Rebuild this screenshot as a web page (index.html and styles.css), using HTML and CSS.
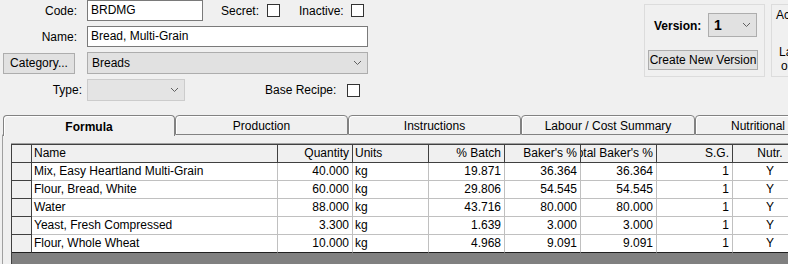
FILE: index.html
```html
<!DOCTYPE html>
<html lang="en">
<head>
  <meta charset="UTF-8" />
  <title>Recipe - Bread, Multi-Grain</title>
  <link rel="stylesheet" href="styles.css">
</head>
<body>

  <div class="header">
    <div class="form">
      <div class="row">
        <label class="lbl">Code:</label>
        <div class="input code">BRDMG</div>
        <span class="txt secret">Secret:</span>
        <span class="check check-secret"></span>
        <span class="txt inactive">Inactive:</span>
        <span class="check check-inactive"></span>
      </div>
      <div class="row">
        <label class="lbl">Name:</label>
        <div class="input wide">Bread, Multi-Grain</div>
      </div>
      <div class="row">
        <button class="btn category">Category...</button>
        <div class="select wide">
          <span>Breads</span>
          <svg class="chev" width="9" height="6" viewBox="0 0 9 6"><polyline points="1,1 4.5,4.5 8,1" fill="none" stroke="#606060" stroke-width="1"/></svg>
        </div>
      </div>
      <div class="row">
        <label class="lbl lbl-type">Type:</label>
        <div class="select type disabled">
          <span></span>
          <svg class="chev" width="9" height="6" viewBox="0 0 9 6"><polyline points="1,1 4.5,4.5 8,1" fill="none" stroke="#606060" stroke-width="1"/></svg>
        </div>
        <span class="txt base">Base Recipe:</span>
        <span class="check check-base"></span>
      </div>
    </div>

    <div class="box version">
      <div class="version-row">
        <span class="version-lbl">Version:</span>
        <div class="select version-sel">
          <span>1</span>
          <svg class="chev" width="9" height="6" viewBox="0 0 9 6"><polyline points="1,1 4.5,4.5 8,1" fill="none" stroke="#606060" stroke-width="1"/></svg>
        </div>
      </div>
      <button class="btn new-version">Create New Version</button>
    </div>

    <div class="box extra">
      <div class="extra-top">Actual Cost</div>
      <div class="extra-bottom">Last modified<br><span class="on">on</span></div>
    </div>
  </div>

  <div class="tabs">
    <div class="tab active">Formula</div>
    <div class="tab">Production</div>
    <div class="tab">Instructions</div>
    <div class="tab">Labour / Cost Summary</div>
    <div class="tab last-tab">Nutritional</div>
  </div>

  <div class="panel">
    <div class="grid">
      <div class="cell hd rh"></div>
      <div class="cell hd">Name</div>
      <div class="cell hd num">Quantity</div>
      <div class="cell hd">Units</div>
      <div class="cell hd num">% Batch</div>
      <div class="cell hd num">Baker's %</div>
      <div class="cell hd num"><span>Total Baker's %</span></div>
      <div class="cell hd num">S.G.</div>
      <div class="cell hd mid">Nutr.</div>
    </div>
    <div class="grid" id="rows"></div>
    <div class="grid-empty"></div>
  </div>

  <script>
    const rows = [
      ['Mix, Easy Heartland Multi-Grain', '40.000', 'kg', '19.871', '36.364', '36.364', '1', 'Y'],
      ['Flour, Bread, White', '60.000', 'kg', '29.806', '54.545', '54.545', '1', 'Y'],
      ['Water', '88.000', 'kg', '43.716', '80.000', '80.000', '1', 'Y'],
      ['Yeast, Fresh Compressed', '3.300', 'kg', '1.639', '3.000', '3.000', '1', 'Y'],
      ['Flour, Whole Wheat', '10.000', 'kg', '4.968', '9.091', '9.091', '1', 'Y']
    ];
    const kinds = ['', 'num', '', 'num', 'num', 'num', 'num', 'mid'];

    let html = '';
    rows.forEach((r, i) => {
      const last = i === rows.length - 1 ? ' last' : '';
      html += '<div class="cell rh' + last + '"></div>';
      r.forEach((v, j) => {
        html += '<div class="cell ' + kinds[j] + last + '">' + v + '</div>';
      });
    });
    document.getElementById('rows').innerHTML = html;
  </script>
</body>
</html>
```

FILE: styles.css
```css
body {
  margin: 0;
  width: 788px;
  height: 264px;
  overflow: hidden;
  background: #f0f0f0;
  font-family: "Liberation Sans", Arial, sans-serif;
  font-size: 12px;
  color: #000;
}

.header {
  display: flex;
  height: 115px;
}

.form {
  width: 644px;
  flex-shrink: 0;
}

.row {
  display: flex;
  align-items: center;
  height: 21px;
  margin-bottom: 5px;
}

.row:nth-child(3),
.row:nth-child(4) {
  height: 22px;
}

.lbl {
  width: 77px;
  margin-right: 10px;
  text-align: right;
}

.lbl-type {
  width: 82px;
  margin-right: 5px;
}

.input {
  box-sizing: border-box;
  height: 21px;
  line-height: 19px;
  padding: 0 3px;
  background: #fff;
  border: 1px solid #7a7a7a;
}

.code {
  width: 116px;
}

.wide {
  width: 281px;
}

.txt.secret {
  margin-left: 18px;
}

.txt.inactive {
  margin-left: 19px;
}

.txt.base {
  margin-left: 80px;
}

.check {
  box-sizing: border-box;
  width: 13px;
  height: 13px;
  background: #fff;
  border: 1px solid #333;
}

.check-secret {
  margin-left: 8px;
}

.check-inactive {
  margin-left: 7px;
}

.check-base {
  margin-left: 11px;
}

.btn {
  box-sizing: border-box;
  font-family: inherit;
  font-size: 12px;
  color: #000;
  background: #e1e1e1;
  border: 1px solid #adadad;
  padding: 0;
  border-radius: 0;
}

.category {
  width: 72px;
  height: 21px;
  margin-left: 3px;
  margin-right: 12px;
}

.select {
  box-sizing: border-box;
  display: flex;
  align-items: center;
  justify-content: space-between;
  height: 22px;
  padding: 0 5px 0 4px;
  background: #e1e1e1;
  border: 1px solid #adadad;
}

.select.type {
  width: 98px;
}

.select.disabled {
  background: #e4e4e4;
  border-color: #cccccc;
}

.chev {
  display: block;
}

.box {
  box-sizing: border-box;
  margin-top: 4px;
  height: 73px;
  border: 1px solid #dcdcdc;
  flex-shrink: 0;
}

.version {
  width: 121px;
}

.version-row {
  display: flex;
  align-items: center;
  margin-top: 8px;
  padding-left: 9px;
}

.version-lbl {
  font-weight: bold;
  width: 54px;
  padding-top: 2px;
}

.version-sel {
  width: 49px;
  height: 24px;
  font-weight: bold;
  font-size: 14px;
  padding-left: 5px;
}

.new-version {
  display: block;
  width: 110px;
  height: 20px;
  margin: 13px 0 0 3px;
}

.extra {
  width: 60px;
  margin-left: 6px;
  overflow: hidden;
  white-space: nowrap;
}

.extra-top {
  padding: 3px 0 0 4px;
}

.extra-bottom {
  padding: 23px 0 0 7px;
  line-height: 14px;
}

.extra-bottom .on {
  padding-left: 2px;
}

/* Tabs */
.tabs {
  display: flex;
  padding-left: 3px;
  height: 20px;
  white-space: nowrap;
}

.tab {
  box-sizing: border-box;
  flex-shrink: 0;
  width: 173px;
  height: 20px;
  line-height: 20px;
  text-align: center;
  border: 1px solid #828282;
  border-radius: 4px 4px 0 0;
  box-shadow: inset 1px 1px 0 #ffffff;
  background: #f0f0f0;
}

.tab:nth-child(4) {
  width: 174px;
}

.tab.last-tab {
  width: 126px;
}

.tab.active {
  width: 172px;
  font-weight: bold;
  line-height: 22px;
  border-bottom: none;
  height: 21px;
  position: relative;
  z-index: 1;
}

.panel {
  margin-left: 2px;
  padding: 9px 0 0 8px;
  border-left: 1px solid #a0a0a0;
  border-top: 1px solid #ffffff;
  margin-top: -1px;
}

.grid {
  display: grid;
  grid-template-columns: 20px 246px 75px 76px 76px 76px 76px 76px 76px;
  border-left: 1px solid #404040;
  width: max-content;
}

.grid:first-child {
  border-top: 1px solid #404040;
  box-shadow: 0 -1px 0 #a0a0a0;
}

.cell {
  box-sizing: border-box;
  height: 18px;
  line-height: 17px;
  padding: 0 3px 0 2px;
  background: #fff;
  border-right: 1px solid #c0c0c0;
  border-bottom: 1px solid #c0c0c0;
  white-space: nowrap;
  overflow: hidden;
}

.cell.hd {
  background: #f0f0f0;
  border-right-color: #404040;
  border-bottom-color: #404040;
}

.cell.rh {
  background: #f0f0f0;
  border-right-color: #404040;
  border-bottom-color: #404040;
}

.cell.last {
  border-bottom-color: #202020;
}

.cell.num {
  display: flex;
  justify-content: flex-end;
}

.cell.num span {
  flex-shrink: 0;
}

.cell.mid {
  text-align: center;
}

.grid-empty {
  height: 20px;
  background: #808080;
  border-left: 1px solid #404040;
}
```
